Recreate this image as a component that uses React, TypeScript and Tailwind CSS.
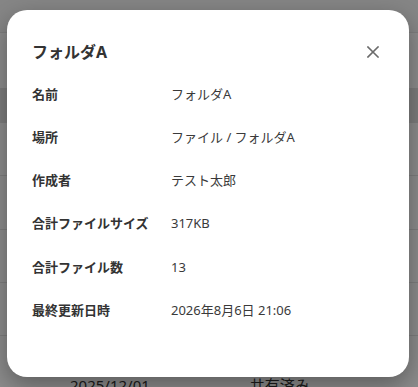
import React from "react";

const rows: [string, string][] = [
  ["名前", "フォルダA"],
  ["場所", "ファイル / フォルダA"],
  ["作成者", "テスト太郎"],
  ["合計ファイルサイズ", "317KB"],
  ["合計ファイル数", "13"],
  ["最終更新日時", "2026年8月6日 21:06"],
];

const font = { fontFamily: '"Noto Sans", "Noto Sans CJK JP", sans-serif' };

export default function App() {
  return (
    <div className="relative w-[418px] h-[387px] overflow-hidden bg-white" style={font}>
      {/* page behind */}
      <div className="flex flex-col text-[13px] text-[#333]">
        <div className="h-[33px] bg-[#f4f4f4] border-b border-[#e6e6e6]" />
        <div className="h-[55px] bg-white" />
        <div className="h-[35px] bg-[#e4e4e4]" />
        <div className="h-[53px] border-b border-[#e6e6e6]" />
        <div className="h-[54px] border-b border-[#e6e6e6]" />
        <div className="h-[53px] border-b border-[#e6e6e6]" />
        <div className="h-[53px] border-b border-[#e6e6e6]" />
        <div className="h-[60px] flex items-start pt-[38px] pl-[70px] gap-[100px] text-[15px]">
          <span>2025/12/01</span>
          <span>共有済み</span>
        </div>
      </div>
      {/* overlay */}
      <div className="absolute inset-0 bg-black/45" />
      {/* dialog */}
      <div className="absolute left-[7px] top-[10px] w-[402px] h-[367px] bg-white rounded-[20px] shadow-[0_8px_24px_rgba(0,0,0,0.35)] pl-[25px] pr-[30px] pt-[30px]">
        <div className="flex items-center justify-between h-[24px]">
          <h2 className="text-[16px] font-bold text-[#333] leading-[24px]">フォルダA</h2>
          <svg width="12" height="12" viewBox="0 0 12 12">
            <path d="M1 1 L11 11 M11 1 L1 11" stroke="#6b6b6b" strokeWidth="1.6" strokeLinecap="square" />
          </svg>
        </div>
        <div className="flex flex-col mt-[9px]">
          {rows.map(([k, v]) => (
            <div key={k} className="flex items-center h-[43.2px] text-[13px] text-[#333]">
              <div className="w-[139px] font-bold">{k}</div>
              <div className="text-[#3a3a3a]">{v}</div>
            </div>
          ))}
        </div>
      </div>
    </div>
  );
}
